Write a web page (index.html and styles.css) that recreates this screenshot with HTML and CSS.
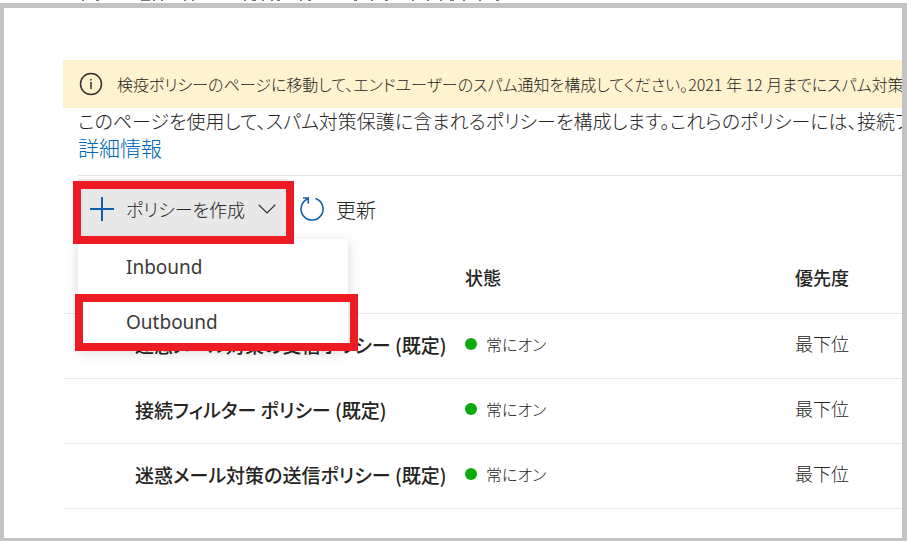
FILE: index.html
```html
<!DOCTYPE html>
<html lang="ja">
<head>
<meta charset="utf-8">
<title>スパム対策ポリシー</title>
<link rel="stylesheet" href="styles.css">
</head>
<body>
<svg class="cut-line" viewBox="0 0 907 3" preserveAspectRatio="xMinYMin slice" aria-hidden="true"><path d="M82 .5h2M96 .5h3M141 .5h9M153 .5h2M161 .5h2M184 .5h2M192 .5h2M244 .5h2M252 .5h4M262 .5h2M271 .5h2M277 .5h3M300 .5h2M308 .5h3M354 .5h3M371 .5h2M385 .5h3M412 .5h2M427 .5h2M440 .5h2M450 .5h4M463 .5h2M479 .5h2M496 .5h3"/></svg>
<main class="window">
  <div class="notice" role="status">
    <svg class="info-icon" viewBox="0 0 24 24" aria-hidden="true"><circle cx="12" cy="12" r="10.5"/><path d="M12 10v7M12 7v1.6"/></svg>
    <span>検疫ポリシーのページに移動して、エンドユーザーのスパム通知を構成してください。2021 年 12 月までにスパム対策</span>
  </div>
  <div class="intro">
    <p>このページを使用して、スパム対策保護に含まれるポリシーを構成します。これらのポリシーには、接続フ</p>
    <a href="#">詳細情報</a>
  </div>
  <div class="toolbar">
    <div class="create">
      <button class="create-button" type="button" aria-haspopup="menu" aria-expanded="true">
        <svg class="plus" viewBox="0 0 24 24" aria-hidden="true"><path d="M12 0v24M0 12h24"/></svg>
        <span>ポリシーを作成</span>
        <svg class="chevron" viewBox="0 0 18 10" aria-hidden="true"><path d="M.7.8 9 9 17.3.8"/></svg>
      </button>
      <div class="menu" role="menu">
        <button type="button" role="menuitem">Inbound</button>
        <button type="button" role="menuitem" class="marked">Outbound</button>
      </div>
    </div>
    <button class="refresh" type="button">
      <svg viewBox="0 0 24 24" aria-hidden="true"><path d="M15.500 1.600A11 11 0 1 1 8.300 1.700M3 1H8.300V6.500"/></svg>
      <span>更新</span>
    </button>
  </div>
  <table class="policies">
    <thead><tr><th class="name"></th><th class="state">状態</th><th>優先度</th></tr></thead>
    <tbody>
      <tr><td class="name">迷惑メール対策の受信ポリシー (既定)</td><td class="state"><span class="status">常にオン</span></td><td>最下位</td></tr>
      <tr><td class="name">接続フィルター ポリシー (既定)</td><td class="state"><span class="status">常にオン</span></td><td>最下位</td></tr>
      <tr><td class="name">迷惑メール対策の送信ポリシー (既定)</td><td class="state"><span class="status">常にオン</span></td><td>最下位</td></tr>
    </tbody>
  </table>
</main>
</body>
</html>
```

FILE: styles.css
```css
*, *::before, *::after { box-sizing: border-box; }
body {
  margin: 0;
  min-height: 100vh;
  display: flex;
  flex-direction: column;
  overflow: hidden;
  background: #fff;
  color: #252423;
  font-family: "Noto Sans CJK JP", sans-serif;
  font-feature-settings: "palt";
  font-weight: 300;
}
button { border: 0; background: none; padding: 0; font: inherit; font-feature-settings: inherit; color: inherit; text-align: left; white-space: nowrap; cursor: pointer; }
svg { flex: none; fill: none; }
.cut-line { display: block; width: 100%; height: 3px; stroke: #777; }
.window {
  flex: 1;
  border: solid #c3c3c3;
  border-width: 5px 5px 3px 4px;
  padding: 52px 0 0 59px;
  overflow: hidden;
}
.notice {
  display: flex;
  align-items: center;
  gap: 14px;
  height: 48px;
  padding-left: 16px;
  background: #fff2ce;
  font-size: 16px;
  white-space: nowrap;
}
.info-icon { width: 24px; height: 24px; stroke: #323130; stroke-width: 1.5; }
.intro { padding-left: 15px; font-size: 19px; line-height: 26px; white-space: nowrap; }
.intro p { margin: 0; }
.intro a { display: block; color: #0068b8; font-size: 21px; text-decoration: none; }
.toolbar {
  display: flex;
  height: 73px;
  margin: 15px 0 0 15px;
  border-top: 1px solid #e4e4e4;
  padding-top: 3px;
  font-size: 20px;
}
.create { position: relative; }
.create::after {
  content: "";
  position: absolute;
  inset: 2px -6px auto -5px;
  height: 63px;
  border: 8px solid #ed1c24;
  pointer-events: none;
  z-index: 3;
}
.create-button {
  display: flex;
  align-items: center;
  width: 210px;
  height: 60px;
  padding: 0 12px;
  background: #e8e8e8;
  font-size: 18px;
}
.plus { width: 24px; height: 24px; margin-right: 12px; stroke: #0f5fb0; stroke-width: 2; }
.chevron { width: 18px; height: 10px; margin-left: auto; stroke: #323130; stroke-width: 1.2; }
.menu {
  position: absolute;
  top: 60px;
  left: 0;
  width: 270px;
  padding-bottom: 4px;
  background: #fff;
  box-shadow: 0 3px 12px rgba(0, 0, 0, .16);
  color: #3b3a39;
  font-family: "Noto Sans", sans-serif;
  font-size: 19px;
  font-weight: 400;
  z-index: 2;
}
.menu { padding-bottom: 0; }
.menu button { position: relative; display: block; width: 100%; height: 55px; padding-left: 48px; }
.marked::after {
  content: "";
  position: absolute;
  inset: 0 -10px -2px -3px;
  border: 8px solid #ed1c24;
}
.refresh { display: flex; align-items: center; gap: 12px; height: 60px; padding-left: 12px; }
.refresh svg { width: 24px; height: 24px; stroke: #0f5fb0; stroke-width: 1.6; overflow: visible; }
.policies { width: 100%; border-collapse: collapse; table-layout: fixed; font-size: 18px; }
.policies th, .policies td { height: 65px; padding: 0 0 6px; border-bottom: 1px solid #e8e8e8; text-align: left; white-space: nowrap; }
.policies th { font-weight: 500; }
.policies td.state, .policies td.name { padding-bottom: 3px; }
.policies .name { width: 402px; padding-left: 72px; font-size: 19px; font-weight: 500; }
.policies .state { width: 330px; }
.status { display: flex; align-items: center; gap: 9px; font-size: 16px; }
.status::before { content: ""; width: 12px; height: 12px; border-radius: 50%; background: #0aab0a; }
```
